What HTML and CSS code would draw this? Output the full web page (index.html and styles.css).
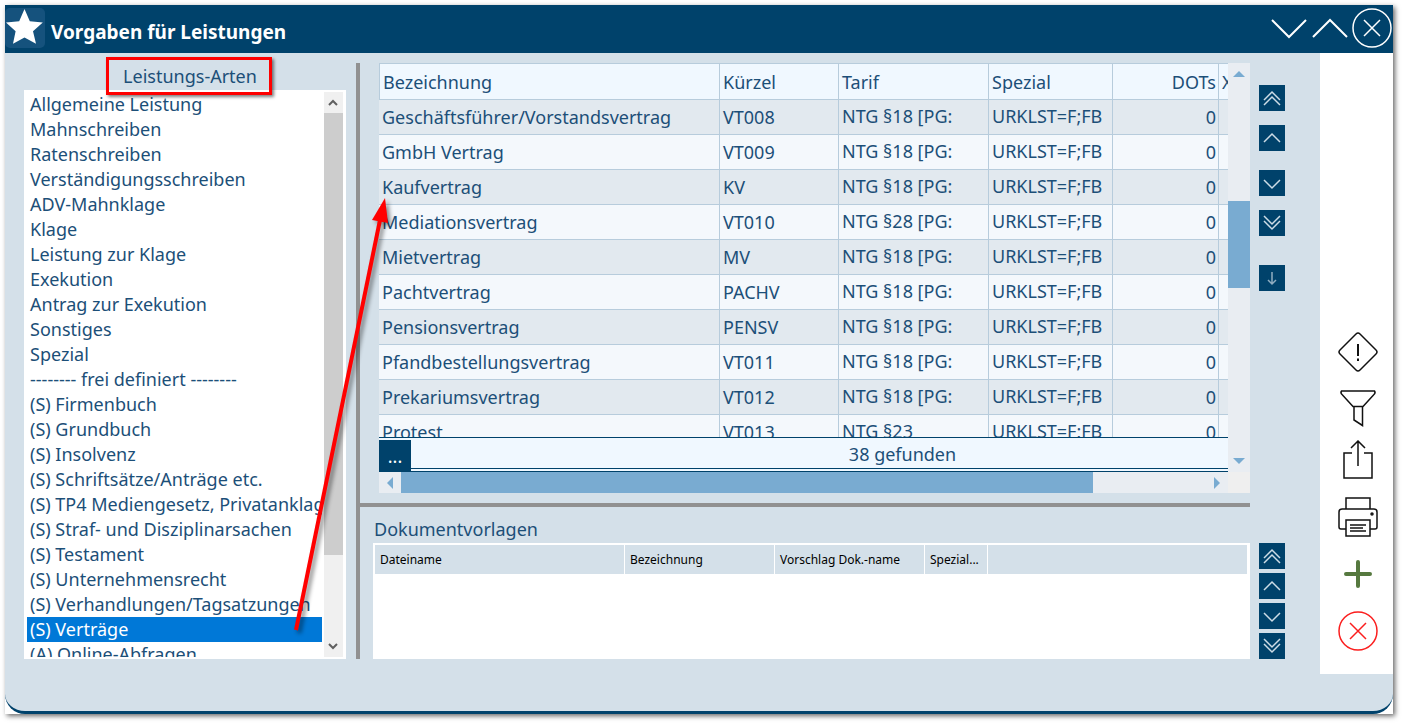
FILE: index.html
```html
<!DOCTYPE html>
<html lang="de">
<head>
<meta charset="utf-8">
<title>Vorgaben für Leistungen</title>
<link rel="stylesheet" href="styles.css">
</head>
<body>
<svg class="defs" aria-hidden="true">
  <symbol id="up2" viewBox="0 0 26 26"><path d="M5 15l8-8 8 8M5 20l8-8 8 8"/></symbol>
  <symbol id="up" viewBox="0 0 26 26"><path d="M5 17l8-8 8 8"/></symbol>
  <symbol id="down" viewBox="0 0 26 26"><path d="M5 10l8 8 8-8"/></symbol>
  <symbol id="down2" viewBox="0 0 26 26"><path d="M5 6l8 8 8-8M5 11l8 8 8-8"/></symbol>
  <symbol id="arrow" viewBox="0 0 26 26"><path opacity=".7" d="M13 7v12M9 15l4 4 4-4"/></symbol>
</svg>
<div class="frame">
<div class="window">
  <header class="titlebar">
    <span class="logo"><svg width="40" height="40" viewBox="0 0 40 40"><path fill="#fff" d="M19.500 1l5.300 12.200 13 1.200-9.800 8.900 3 12.400-11.500-6.200-11.500 6.200 2.600-12.400L1 14.400l13.200-1.200z"/></svg></span>
    <h1>Vorgaben für Leistungen</h1>
    <div class="winbuttons">
      <button aria-label="Minimieren"><svg width="38" height="40" viewBox="0 0 38 40"><path d="M2 12l17 17 17-17"/></svg></button>
      <button aria-label="Maximieren"><svg width="38" height="40" viewBox="0 0 38 40"><path d="M2 29l17-17 17 17"/></svg></button>
      <button aria-label="Schließen"><svg width="40" height="40" viewBox="0 0 40 40"><circle cx="20" cy="20" r="19"/><path d="M12 12l16 16M28 12L12 28"/></svg></button>
    </div>
  </header>
  <div class="content">
    <section class="kinds">
      <h2 class="kinds-title" id="kinds">Leistungs-Arten</h2>
      <div class="listbox">
        <ul role="listbox" aria-labelledby="kinds">
          <li role="option">Allgemeine Leistung</li>
          <li role="option">Mahnschreiben</li>
          <li role="option">Ratenschreiben</li>
          <li role="option">Verständigungsschreiben</li>
          <li role="option">ADV-Mahnklage</li>
          <li role="option">Klage</li>
          <li role="option">Leistung zur Klage</li>
          <li role="option">Exekution</li>
          <li role="option">Antrag zur Exekution</li>
          <li role="option">Sonstiges</li>
          <li role="option">Spezial</li>
          <li role="option">-------- frei definiert --------</li>
          <li role="option">(S) Firmenbuch</li>
          <li role="option">(S) Grundbuch</li>
          <li role="option">(S) Insolvenz</li>
          <li role="option">(S) Schriftsätze/Anträge etc.</li>
          <li role="option">(S) TP4 Mediengesetz, Privatanklage</li>
          <li role="option">(S) Straf- und Disziplinarsachen</li>
          <li role="option">(S) Testament</li>
          <li role="option">(S) Unternehmensrecht</li>
          <li role="option">(S) Verhandlungen/Tagsatzungen</li>
          <li role="option" aria-selected="true" class="selected">(S) Verträge</li>
          <li role="option">(A) Online-Abfragen</li>
        </ul>
        <div class="listscroll">
          <svg width="18" height="21" viewBox="0 0 18 21"><path d="M5 13l4-4 4 4"/></svg>
          <span class="listthumb"></span>
          <svg width="18" height="21" viewBox="0 0 18 21"><path d="M5 8l4 4 4-4"/></svg>
        </div>
      </div>
    </section>
    <div class="splitter"></div>
    <main class="main">
      <div class="upper">
        <div class="gridbox">
          <div class="gridview">
            <table class="services">
              <colgroup><col><col class="c-code"><col class="c-tariff"><col class="c-special"><col class="c-dots"><col class="c-last"></colgroup>
              <thead><tr><th>Bezeichnung</th><th>Kürzel</th><th>Tarif</th><th>Spezial</th><th class="num">DOTs</th><th>X</th></tr></thead>
              <tbody>
                <tr><td>Geschäftsführer/Vorstandsvertrag</td><td>VT008</td><td class="memo">NTG §18 [PG:</td><td class="memo">URKLST=F;FB</td><td class="num">0</td><td></td></tr>
                <tr><td>GmbH Vertrag</td><td>VT009</td><td class="memo">NTG §18 [PG:</td><td class="memo">URKLST=F;FB</td><td class="num">0</td><td></td></tr>
                <tr><td>Kaufvertrag</td><td>KV</td><td class="memo">NTG §18 [PG:</td><td class="memo">URKLST=F;FB</td><td class="num">0</td><td></td></tr>
                <tr><td>Mediationsvertrag</td><td>VT010</td><td class="memo">NTG §28 [PG:</td><td class="memo">URKLST=F;FB</td><td class="num">0</td><td></td></tr>
                <tr><td>Mietvertrag</td><td>MV</td><td class="memo">NTG §18 [PG:</td><td class="memo">URKLST=F;FB</td><td class="num">0</td><td></td></tr>
                <tr><td>Pachtvertrag</td><td>PACHV</td><td class="memo">NTG §18 [PG:</td><td class="memo">URKLST=F;FB</td><td class="num">0</td><td></td></tr>
                <tr><td>Pensionsvertrag</td><td>PENSV</td><td class="memo">NTG §18 [PG:</td><td class="memo">URKLST=F;FB</td><td class="num">0</td><td></td></tr>
                <tr><td>Pfandbestellungsvertrag</td><td>VT011</td><td class="memo">NTG §18 [PG:</td><td class="memo">URKLST=F;FB</td><td class="num">0</td><td></td></tr>
                <tr><td>Prekariumsvertrag</td><td>VT012</td><td class="memo">NTG §18 [PG:</td><td class="memo">URKLST=F;FB</td><td class="num">0</td><td></td></tr>
                <tr><td>Protest</td><td>VT013</td><td class="memo">NTG §23</td><td class="memo">URKLST=F;FB</td><td class="num">0</td><td></td></tr>
              </tbody>
            </table>
          </div>
          <div class="gridfoot"><button class="more">...</button><span class="found">38 gefunden</span></div>
          <div class="vscroll">
            <svg width="22" height="22" viewBox="0 0 22 22"><path d="M5 14l6-6 6 6z"/></svg>
            <span class="vthumb"></span>
            <svg width="22" height="22" viewBox="0 0 22 22"><path d="M5 8h12l-6 6z"/></svg>
          </div>
          <div class="hscroll">
            <svg width="22" height="21" viewBox="0 0 22 21"><path d="M14 5v12l-6-6z"/></svg>
            <span class="htrack"><span class="hthumb"></span></span>
            <svg width="22" height="21" viewBox="0 0 22 21"><path d="M8 5v12l6-6z"/></svg>
          </div>
          <div class="corner"></div>
        </div>
        <nav class="moves moves-top" aria-label="Leistungen sortieren">
          <button aria-label="Ganz nach oben"><svg><use href="#up2"/></svg></button>
          <button aria-label="Nach oben"><svg><use href="#up"/></svg></button>
          <button class="apart" aria-label="Nach unten"><svg><use href="#down"/></svg></button>
          <button aria-label="Ganz nach unten"><svg><use href="#down2"/></svg></button>
          <button class="far" aria-label="Übernehmen"><svg><use href="#arrow"/></svg></button>
        </nav>
      </div>
      <div class="divider"></div>
      <section class="lower">
        <h2 class="docs-title">Dokumentvorlagen</h2>
        <div class="docs-row">
          <div class="docs">
            <table>
              <colgroup><col class="d-file"><col class="d-name"><col class="d-name"><col class="d-special"><col></colgroup>
              <thead><tr><th>Dateiname</th><th>Bezeichnung</th><th>Vorschlag Dok.-name</th><th>Spezial...</th><th></th></tr></thead>
            </table>
          </div>
          <nav class="moves" aria-label="Vorlagen sortieren">
            <button aria-label="Ganz nach oben"><svg><use href="#up2"/></svg></button>
            <button aria-label="Nach oben"><svg><use href="#up"/></svg></button>
            <button aria-label="Nach unten"><svg><use href="#down"/></svg></button>
            <button aria-label="Ganz nach unten"><svg><use href="#down2"/></svg></button>
          </nav>
        </div>
      </section>
    </main>
    <aside class="toolbar">
      <button aria-label="Hinweis"><svg width="40" height="40" viewBox="0 0 40 40"><path d="M18 2q2-2 4 0l16 16q2 2 0 4L22 38q-2 2-4 0L2 22q-2-2 0-4z"/><path stroke-width="2" d="M20 12v12M20 26.500v2.500"/></svg></button>
      <button class="short" aria-label="Filtern"><svg width="40" height="40" viewBox="0 0 40 40"><path d="M3.500 2h33q1.500 2-1 4L25 17.500H15L4.500 6Q2 4 3.500 2zM16 17.500v13.500l8.500 5.500v-19"/></svg></button>
      <button aria-label="Exportieren"><svg width="40" height="40" viewBox="0 0 40 40"><path d="M14 13H6v25h28V13h-8M20 26V1M13 8l7-7 7 7"/></svg></button>
      <button aria-label="Drucken"><svg width="40" height="40" viewBox="0 0 40 40"><path d="M8 12V1h24v11M8 32H3q-2 0-2-2V15q0-3 3-3h32q3 0 3 3v15q0 2-2 2h-5M8 23h24v16H8zM12 28h16M12 31h13M12 34h16"/><circle cx="34" cy="17" r="1"/></svg></button>
      <button class="add" aria-label="Neu"><svg width="40" height="40" viewBox="0 0 40 40"><path d="M20 8v24M8 20h24"/></svg></button>
      <button class="cancel" aria-label="Abbrechen"><svg width="40" height="40" viewBox="0 0 40 40"><circle cx="20" cy="20" r="19"/><path d="M12 12l16 16M28 12L12 28"/></svg></button>
    </aside>
  </div>
</div>
</div>
<svg class="pointer" width="110" height="450" viewBox="0 0 110 450" aria-hidden="true"><path d="M16 440L100 30" stroke="#f00" stroke-width="4"/><path fill="#f00" d="M105 8l3 25-16-3z"/></svg>
</body>
</html>
```
FILE: styles.css
```css
* { box-sizing: border-box; }
body {
  margin: 0;
  height: 100vh;
  padding: 5px 9px 9px 5px;
  display: flex;
  background: #fff;
  color: #1c4f78;
  font: 18px/25px "Noto Sans", sans-serif;
}
h1, h2, ul { margin: 0; padding: 0; font-weight: 400; }
button { padding: 0; border: 0; background: none; font: inherit; color: inherit; }
svg { display: block; fill: none; }
.defs { position: absolute; width: 0; height: 0; }

.frame { flex: 1; display: flex; min-width: 0; background: #fff; box-shadow: 2px 2px 5px rgba(0, 0, 0, .6); }
.window {
  flex: 1;
  min-width: 0;
  display: flex;
  flex-direction: column;
  background: #d4e0e9;
  border-bottom: 3px solid #00426b;
  border-radius: 0 0 20px 20px;
}
.titlebar { display: flex; align-items: center; height: 48px; padding-bottom: 2px; background: #00426b; color: #fff; }
.logo { background: #15527d; border-radius: 5px; }
.titlebar h1 { flex: 1; padding: 8px 0 0 6px; font-size: 19px; font-weight: 700; }
.winbuttons { display: flex; gap: 3px; padding-right: 1px; stroke: #fff; stroke-width: 2; }
.winbuttons button:last-child { stroke-width: 1.500; }

.content { flex: 1; min-height: 0; display: flex; padding-bottom: 37px; }
.kinds { width: 322px; margin: 4px 10px 15px 19px; display: flex; flex-direction: column; }
.kinds-title {
  align-self: center;
  width: 166px;
  height: 38px;
  margin: 0 0 -5px 8px;
  padding-left: 2px;
  border: 3px solid #f00;
  box-shadow: 2px 2px 3px rgba(0, 0, 0, .5);
  text-align: center;
  font-size: 18px;
  line-height: 32px;
  z-index: 1;
}
.listbox { flex: 1; min-height: 0; display: flex; gap: 2px; padding: 2px 3px; background: #fff; }
.listbox ul { flex: 1; min-width: 0; overflow: hidden; list-style: none; }
.listbox li { overflow: hidden; white-space: nowrap; padding-left: 3px; }
.listbox .selected { background: #0078d7; color: #fff; }
.listscroll { width: 19px; display: flex; flex-direction: column; background: #f0f0f0; stroke: #606060; stroke-width: 2; }
.listthumb { height: 442px; margin-bottom: auto; background: #cdcdcd; }
.splitter { width: 4px; margin: 10px 0 15px; background: #919191; }

.main { flex: 1; min-width: 0; display: flex; flex-direction: column; margin: 10px 35px 15px 0; }
.upper { flex: 1; min-height: 0; display: flex; gap: 9px; padding-left: 19px; }
.gridbox { flex: 1; min-width: 0; display: grid; grid-template: minmax(0, 1fr) 35px 21px / minmax(0, 1fr) 22px; }
.gridview { overflow: hidden; }
table { width: 100%; table-layout: fixed; border-collapse: separate; border-spacing: 0; }
th { font-weight: 400; text-align: left; }
.services th, .services td {
  height: 35px;
  padding: 0 3px;
  border-right: 1px solid #b7ccdc;
  border-bottom: 1px solid #b7ccdc;
  overflow: hidden;
  white-space: nowrap;
}
.services th { height: 37px; padding-top: 2px; background: #f0f8ff; border-top: 1px solid #b7ccdc; }
.services th:first-child { border-left: 1px solid #b7ccdc; }
.services tr > :last-child { border-right: 0; padding-right: 0; }
.services td { background: #f4f8fc; }
.services tr:nth-child(odd) td { background: #e2e9ef; }
.services .memo { padding-bottom: 2px; }
.services .num { text-align: right; padding-right: 2px; }
.c-code { width: 119px; }
.c-tariff { width: 150px; }
.c-special { width: 124px; }
.c-dots { width: 106px; }
.c-last { width: 9px; }
.gridfoot {
  grid-row: 2;
  display: flex;
  background: #f0f8ff;
  border-top: 1px solid #00426b;
  border-bottom: 4px double #00426b;
}
.more { width: 32px; height: 32px; margin-top: 2px; background: #00426b; color: #fff; }
.found { flex: 1; margin-left: 166px; text-align: center; line-height: 33px; }
.vscroll { grid-area: 1 / 2 / 3 / 3; display: flex; flex-direction: column; justify-content: space-between; background: #e9edf2; }
.vscroll svg, .hscroll svg { fill: #79abd1; }
.vthumb { height: 87px; margin: 116px 0 auto; background: #79abd1; }
.hscroll { grid-row: 3; display: flex; background: #e9edf2; }
.htrack { flex: 1; }
.hthumb { display: block; width: 86%; height: 100%; background: #79abd1; }
.corner { background: #efefef; }

.moves { display: flex; flex-direction: column; gap: 4px; }
.moves button { width: 26px; height: 26px; background: #00426b; }
.moves svg { width: 26px; height: 26px; stroke: #cddce6; stroke-width: 1.500; }
.moves-top { padding-top: 22px; gap: 14px; }
.moves-top .apart { margin-top: 5px; }
.moves-top .far { margin-top: 15px; }
.divider { height: 4px; margin: 10px 35px 0 0; background: #919191; }
.lower { padding: 10px 0 0 13px; }
.docs-title { font-size: 18px; line-height: 25px; padding: 0 0 1px 1px; }
.docs-row { display: flex; gap: 9px; }
.docs { flex: 1; min-width: 0; min-height: 116px; padding: 2px; background: #fff; color: #000; font-size: 12px; }
.docs th { height: 29px; padding: 0 4px 0 5px; background: #d4e0e9; border-right: 1px solid #fff; white-space: nowrap; }
.d-file { width: 250px; }
.d-name { width: 150px; }
.d-special { width: 63px; }

.toolbar {
  width: 73px;
  display: flex;
  flex-direction: column;
  align-items: center;
  justify-content: flex-end;
  gap: 17px;
  padding: 0 0 23px 3px;
  background: #fff;
  stroke: #111;
  stroke-width: 1.500;
}
.toolbar button { width: 40px; height: 40px; }
.toolbar .short { height: 34px; }
.toolbar .add { stroke: #56793f; stroke-width: 4; stroke-linecap: round; }
.toolbar .cancel { stroke: #fb1e1e; }
.pointer { position: absolute; left: 280px; top: 190px; filter: drop-shadow(3px 3px 2px rgba(0, 0, 0, .45)); pointer-events: none; }
```
